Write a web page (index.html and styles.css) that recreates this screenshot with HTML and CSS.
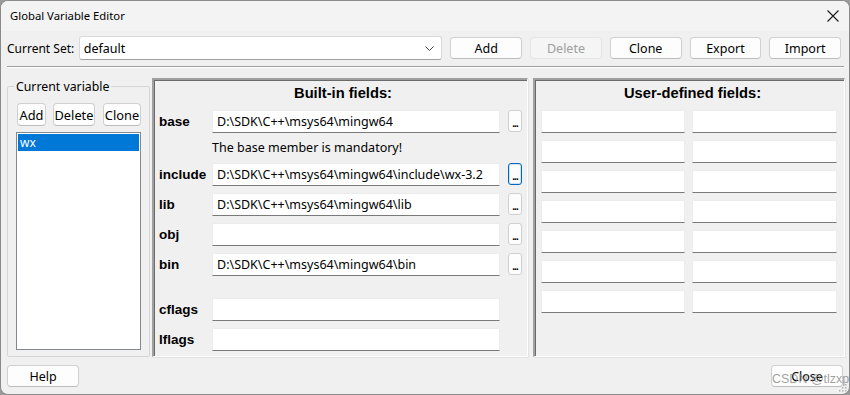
FILE: index.html
```html
<!DOCTYPE html>
<html lang="en">
<head>
    <meta charset="UTF-8">
    <title>Global Variable Editor</title>
    <link rel="stylesheet" href="styles.css">
</head>
<body>

<div class="window">
    <div class="titlebar">
        <span class="title">Global Variable Editor</span>
        <svg class="close-x" width="12" height="12" viewBox="0 0 12 12">
            <path d="M0.5 0.5 L11.5 11.5 M11.5 0.5 L0.5 11.5" stroke="#1a1a1a" stroke-width="1.1" fill="none"/>
        </svg>
    </div>

    <div class="toolbar">
        <span class="set-label">Current Set:</span>
        <div class="combo">
            <span>default</span>
            <svg width="9" height="5" viewBox="0 0 9 5">
                <path d="M0.5 0.5 L4.5 4.5 L8.5 0.5" stroke="#444" stroke-width="1" fill="none"/>
            </svg>
        </div>
        <button class="btn">Add</button>
        <button class="btn" disabled>Delete</button>
        <button class="btn">Clone</button>
        <button class="btn">Export</button>
        <button class="btn">Import</button>
    </div>

    <div class="sep"></div>

    <div class="main">
        <div class="vars">
            <span class="legend">Current variable</span>
            <div class="var-btns">
                <button class="btn sm w-add">Add</button>
                <button class="btn sm w-del">Delete</button>
                <button class="btn sm w-clone">Clone</button>
            </div>
            <div class="listbox">
                <div class="item selected">wx</div>
            </div>
        </div>

        <div class="panel builtin">
            <h2>Built-in fields:</h2>
            <div class="fields">
                <label>base</label>
                <div class="input">D:\SDK\C++\msys64\mingw64</div>
                <button class="dots">...</button>

                <span></span>
                <div class="note">The base member is mandatory!</div>
                <span></span>

                <label>include</label>
                <div class="input">D:\SDK\C++\msys64\mingw64\include\wx-3.2</div>
                <button class="dots focus">...</button>

                <label>lib</label>
                <div class="input">D:\SDK\C++\msys64\mingw64\lib</div>
                <button class="dots">...</button>

                <label>obj</label>
                <div class="input"></div>
                <button class="dots">...</button>

                <label>bin</label>
                <div class="input">D:\SDK\C++\msys64\mingw64\bin</div>
                <button class="dots">...</button>

                <span class="spacer"></span>
                <span class="spacer"></span>
                <span class="spacer"></span>

                <label>cflags</label>
                <div class="input"></div>
                <span></span>

                <label>lflags</label>
                <div class="input"></div>
                <span></span>
            </div>
        </div>

        <div class="panel user">
            <h2>User-defined fields:</h2>
            <div class="ugrid">
                <div class="input"></div><div class="input"></div>
                <div class="input"></div><div class="input"></div>
                <div class="input"></div><div class="input"></div>
                <div class="input"></div><div class="input"></div>
                <div class="input"></div><div class="input"></div>
                <div class="input"></div><div class="input"></div>
                <div class="input"></div><div class="input"></div>
            </div>
        </div>
    </div>

    <div class="footer">
        <button class="btn">Help</button>
        <button class="btn">Close</button>
    </div>

    <span class="watermark">CSDN @tlzxp</span>
    <svg class="grip" width="8" height="8" viewBox="0 0 8 8">
        <rect x="6" y="0" width="1.5" height="1.5" fill="#b0b0b0"/>
        <rect x="3" y="3" width="1.5" height="1.5" fill="#b0b0b0"/>
        <rect x="6" y="3" width="1.5" height="1.5" fill="#b0b0b0"/>
        <rect x="0" y="6" width="1.5" height="1.5" fill="#b0b0b0"/>
        <rect x="3" y="6" width="1.5" height="1.5" fill="#b0b0b0"/>
        <rect x="6" y="6" width="1.5" height="1.5" fill="#b0b0b0"/>
    </svg>
</div>

</body>
</html>
```

FILE: styles.css
```css
body {
    margin: 0;
    padding: 0;
    background-color: #9a9a9a;
    font-family: "Noto Sans", "Liberation Sans", sans-serif;
    font-size: 12px;
    color: #000;
}
.window {
    position: relative;
    box-sizing: border-box;
    width: 850px;
    height: 395px;
    border: 1px solid #8a8a8a;
    border-radius: 8px;
    background-color: #f0f0f0;
    overflow: hidden;
}
.titlebar {
    height: 30px;
    background-color: #f3f3f3;
    display: flex;
    align-items: center;
    padding-left: 9px;
}
.title {
    font-size: 11.3px;
    margin-top: -1px;
}
.close-x {
    margin-left: auto;
    margin-right: 10px;
}
.toolbar {
    display: flex;
    align-items: center;
    height: 24px;
    margin-top: 5px;
    padding-left: 6px;
}
.set-label {
    width: 72px;
}
.combo {
    box-sizing: border-box;
    width: 365px;
    height: 24px;
    background: #fff;
    border: 1px solid #d9d9d9;
    border-bottom-color: #a0a0a0;
    border-radius: 3px;
    display: flex;
    align-items: center;
    padding: 0 7px 0 4px;
    margin-right: 8px;
    font-size: 12.5px;
}
.combo span {
    flex: 1;
}
.btn {
    box-sizing: border-box;
    width: 72px;
    height: 22px;
    margin-right: 8px;
    padding: 0;
    background: #fdfdfd;
    border: 1px solid #d0d0d0;
    border-bottom-color: #bcbcbc;
    border-radius: 4px;
    font-family: inherit;
    font-size: 12.5px;
    color: #000;
}
.btn:disabled {
    background: #f5f5f5;
    border-color: #e5e5e5;
    color: #a0a0a0;
}
.sep {
    margin: 6px 5px 0 6px;
    border-top: 1px solid #a0a0a0;
    border-bottom: 1px solid #fff;
}
.main {
    display: flex;
    height: 279px;
    margin-top: 10px;
    padding-left: 6px;
}
.vars {
    position: relative;
    box-sizing: border-box;
    width: 143px;
    margin-top: 8px;
    border: 1px solid #d5d5d5;
    border-radius: 2px;
    padding: 16px 0 0 8px;
    margin-right: 1px;
}
.legend {
    position: absolute;
    top: -9px;
    left: 6px;
    padding: 0 2px;
    background: #f0f0f0;
    font-size: 12.3px;
}
.var-btns {
    display: flex;
    height: 23px;
    padding-left: 1px;
}
.btn.sm {
    height: 23px;
    margin-right: 0;
    font-size: 12.8px;
}
.w-add { width: 29px; }
.w-del { width: 42px; margin-left: 7px; }
.w-clone { width: 38px; margin-left: 8px; }
.listbox {
    box-sizing: border-box;
    width: 125px;
    height: 218px;
    margin-top: 6px;
    background: #fff;
    border: 1px solid #828790;
    padding: 1px;
}
.item {
    height: 17px;
    line-height: 17px;
    padding-left: 2px;
}
.item.selected {
    background: #0078d7;
    color: #fff;
}
.panel {
    box-sizing: border-box;
    height: 279px;
    border-top: 2px solid #a0a0a0;
    border-left: 2px solid #a0a0a0;
    border-right: 1px solid #fff;
    border-bottom: 1px solid #fff;
    box-shadow: inset 1px 1px 0 #6a6a6a, 1px 1px 0 #e3e3e3;
}
.panel h2 {
    margin: 0;
    height: 30px;
    padding-top: 5px;
    box-sizing: border-box;
    text-align: center;
    font-family: "Liberation Sans", Arial, sans-serif;
    font-size: 14.7px;
    font-weight: bold;
}
.builtin {
    width: 376px;
    margin-left: 1px;
    padding-left: 5px;
}
.fields {
    display: grid;
    grid-template-columns: 53px 288px 22px;
    grid-template-rows: 23px 16px 23px 23px 23px 23px 8px 23px 23px;
    row-gap: 7px;
}
.fields label {
    font-family: "Liberation Sans", Arial, sans-serif;
    font-weight: bold;
    font-size: 13.5px;
    align-self: center;
}
.note {
    line-height: 16px;
    font-size: 12.5px;
}
.input {
    box-sizing: border-box;
    height: 23px;
    line-height: 22px;
    background: #fff;
    border: 1px solid #ececec;
    border-bottom: 1px solid #7a7a7a;
    padding-left: 4px;
    font-size: 12.5px;
    white-space: nowrap;
    overflow: hidden;
}
.dots {
    box-sizing: border-box;
    width: 14px;
    height: 22px;
    margin-left: 8px;
    padding: 6px 0 0 0;
    background: #fdfdfd;
    border: 1px solid #cfcfcf;
    border-radius: 3px;
    font-family: "Liberation Sans", Arial, sans-serif;
    font-size: 10px;
    font-weight: bold;
    letter-spacing: -1px;
    line-height: 10px;
    text-align: center;
}
.dots.focus {
    border: 1px solid #0067c0;
    box-shadow: inset 0 0 0 1px #cfe3f7;
}
.user {
    width: 312px;
    margin-left: 5px;
    padding-left: 6px;
}
.ugrid {
    display: grid;
    grid-template-columns: 144px 145px;
    column-gap: 7px;
    row-gap: 7px;
}
.footer {
    display: flex;
    justify-content: space-between;
    padding: 8px 0 0 6px;
}
.footer .btn {
    margin-right: 6px;
}
.watermark {
    position: absolute;
    left: 771px;
    top: 371px;
    white-space: nowrap;
    font-family: "Liberation Sans", Arial, sans-serif;
    font-size: 12.5px;
    color: rgba(130, 130, 130, 0.75);
}
.grip {
    position: absolute;
    right: 2px;
    bottom: 2px;
}
```
